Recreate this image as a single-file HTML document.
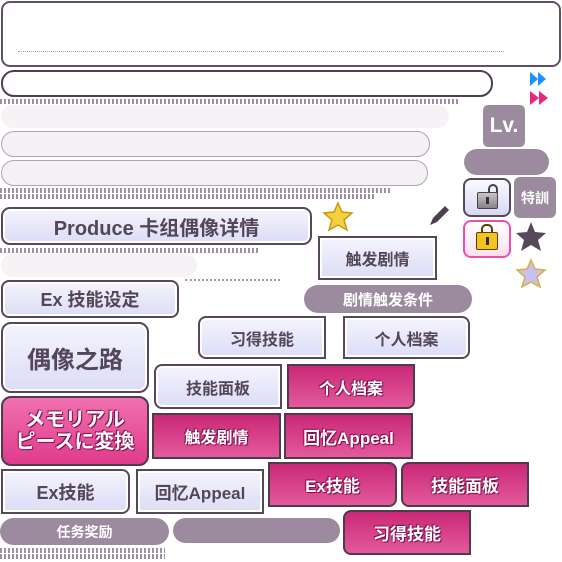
<!DOCTYPE html>
<html><head><meta charset="utf-8"><style>
body{margin:0;width:562px;height:562px;background:#fff;position:relative;overflow:hidden;font-family:"Liberation Sans","Noto Sans CJK SC",sans-serif;font-weight:bold}
div{position:absolute;box-sizing:border-box}
.lt{background:linear-gradient(#f4f4fd,#dcdcf6);border:2px solid #56485a;color:#54465a;display:flex;align-items:center;justify-content:center;box-shadow:inset 0 0 0 2px #fff}
.pk{background:linear-gradient(#c92877,#e45a9c);border:2px solid #4e3c4c;color:#fff;display:flex;align-items:center;justify-content:center;text-shadow:0 0 2px #8a1050,1px 1px 0 #8a1050,-1px -1px 0 #8a1050}
.gp{background:#9c8b9f;color:#fff;border-radius:14px;display:flex;align-items:center;justify-content:center}
.dash{height:5px;background:repeating-linear-gradient(90deg,#9e8fa3 0 2px,transparent 2px 4px)}
.bar{background:#f4f1f6;border:1px solid #b4a3aa;border-radius:13px}
</style></head><body>
<div style="left:1px;top:1px;width:560px;height:66px;border:2px solid #5f5266;border-radius:9px"></div>
<div style="left:18px;top:51px;width:486px;height:1px;border-top:1px dotted #a39dab"></div>
<div style="left:1px;top:70px;width:492px;height:27px;border:2px solid #4c3f52;border-radius:13px"></div>
<svg style="position:absolute;left:530px;top:72px" width="20" height="34"><path d="M0 0L8 7L0 14ZM8 0L16 7L8 14Z" fill="#1e90ff"/><path d="M0 19L9 26L0 33ZM9 19L18 26L9 33Z" fill="#e8287f"/></svg>
<div class="dash" style="left:0;top:99px;width:460px"></div>
<div style="left:1px;top:105px;width:448px;height:23px;background:#f6f2f6;border-radius:12px"></div>
<div style="left:483px;top:105px;width:42px;height:42px;background:#9c8b9f;border-radius:5px;color:#fff;font-size:21px;display:flex;align-items:center;justify-content:center">Lv.</div>
<div class="bar" style="left:1px;top:131px;width:429px;height:26px"></div>
<div class="bar" style="left:1px;top:160px;width:427px;height:26px"></div>
<div class="gp" style="left:464px;top:149px;width:85px;height:26px"></div>
<div class="dash" style="left:0;top:188px;width:390px"></div>
<div class="dash" style="left:0;top:194px;width:375px"></div>
<div style="left:463px;top:178px;width:48px;height:39px;border:2px solid #55485a;border-radius:8px;background:linear-gradient(#fafaff,#d8d8f4)"></div>
<div style="left:477px;top:192px;width:21px;height:17px;background:linear-gradient(#c8c4c8,#888388);border-radius:2px;border:1px solid #444"></div>
<div style="left:486px;top:197px;width:3px;height:7px;background:#333"></div>
<div style="left:488px;top:184px;width:10px;height:9px;border:2px solid #444;border-bottom:none;border-radius:5px 5px 0 0"></div>
<div style="left:514px;top:177px;width:42px;height:41px;background:#9c8b9f;border-radius:6px;color:#fff;font-size:14px;display:flex;align-items:center;justify-content:center">特訓</div>
<svg style="position:absolute;left:426px;top:201px" width="30" height="28"><path d="M4 24L7 17L19 5L23 9L11 21Z" fill="#4c4050"/></svg>
<div style="left:463px;top:220px;width:48px;height:38px;border:2px solid #ee4fa8;border-radius:8px;background:linear-gradient(#fff,#fbe0f0)"></div>
<div style="left:476px;top:232px;width:22px;height:18px;background:#f1c51e;border:1px solid #5a4000;border-radius:2px"></div>
<div style="left:486px;top:237px;width:3px;height:8px;background:#3a2800"></div>
<div style="left:481px;top:224px;width:12px;height:9px;border:2px solid #5a4000;border-bottom:none;border-radius:5px 5px 0 0"></div>
<svg style="position:absolute;left:514px;top:220px" width="34" height="34"><path d="M17 2L21 12L32 13L24 20L27 31L17 25L7 31L10 20L2 13L13 12Z" fill="#564a5a"/></svg>
<svg style="position:absolute;left:515px;top:258px" width="32" height="32"><path d="M16 2L20 11L30 12L22 19L25 29L16 24L7 29L10 19L2 12L12 11Z" fill="#c8c0f0" stroke="#d8b040" stroke-width="1.5"/></svg>
<svg style="position:absolute;left:322px;top:201px" width="32" height="32"><path d="M16 2L20 11L30 12L22 19L25 29L16 24L7 29L10 19L2 12L12 11Z" fill="#f4d040" stroke="#c89a10" stroke-width="1.5"/></svg>
<div class="lt" style="left:1px;top:207px;width:311px;height:38px;border-radius:9px;font-size:20px">Produce 卡组偶像详情</div>
<div class="dash" style="left:0;top:248px;width:258px"></div>
<div style="left:1px;top:254px;width:196px;height:23px;background:#f6f2f6;border-radius:12px"></div>
<div class="lt" style="left:318px;top:236px;width:119px;height:44px;font-size:16px">触发剧情</div>
<div style="left:185px;top:279px;width:95px;height:2px;border-top:2px dotted #a39dab"></div>
<div class="lt" style="left:1px;top:280px;width:178px;height:38px;border-radius:8px;font-size:18px">Ex 技能设定</div>
<div class="gp" style="left:304px;top:285px;width:168px;height:28px;font-size:15px">剧情触发条件</div>
<div class="lt" style="left:198px;top:316px;width:128px;height:43px;border-radius:8px 0 0 8px;font-size:16px">习得技能</div>
<div class="lt" style="left:343px;top:316px;width:127px;height:43px;border-radius:0 8px 8px 0;font-size:16px">个人档案</div>
<div class="lt" style="left:1px;top:322px;width:148px;height:71px;border-radius:10px;font-size:24px">偶像之路</div>
<div class="lt" style="left:154px;top:364px;width:128px;height:45px;border-radius:8px 0 0 8px;font-size:16px">技能面板</div>
<div class="pk" style="left:287px;top:364px;width:128px;height:45px;border-radius:0 0 8px 0;font-size:16px">个人档案</div>
<div class="pk" style="left:1px;top:396px;width:148px;height:70px;border-radius:10px;font-size:20px;line-height:22px;text-align:center;background:linear-gradient(#f070b0,#e03c8c)">メモリアル<br>ピースに変換</div>
<div class="pk" style="left:152px;top:413px;width:129px;height:46px;font-size:16px">触发剧情</div>
<div class="pk" style="left:284px;top:413px;width:129px;height:46px;font-size:17px">回忆Appeal</div>
<div class="lt" style="left:1px;top:469px;width:129px;height:45px;border-radius:0 8px 8px 0;font-size:18px">Ex技能</div>
<div class="lt" style="left:136px;top:469px;width:128px;height:45px;font-size:17px">回忆Appeal</div>
<div class="pk" style="left:268px;top:462px;width:129px;height:45px;border-radius:0 8px 8px 0;font-size:17px">Ex技能</div>
<div class="pk" style="left:401px;top:462px;width:128px;height:45px;border-radius:8px 0 0 8px;font-size:17px">技能面板</div>
<div class="gp" style="left:0;top:518px;width:169px;height:27px;font-size:14px">任务奖励</div>
<div class="gp" style="left:173px;top:518px;width:167px;height:25px"></div>
<div class="pk" style="left:343px;top:510px;width:128px;height:45px;border-radius:8px 0 0 8px;font-size:17px">习得技能</div>
<div class="dash" style="left:0;top:548px;width:165px"></div>
<div class="dash" style="left:0;top:554px;width:165px"></div>
</body></html>
